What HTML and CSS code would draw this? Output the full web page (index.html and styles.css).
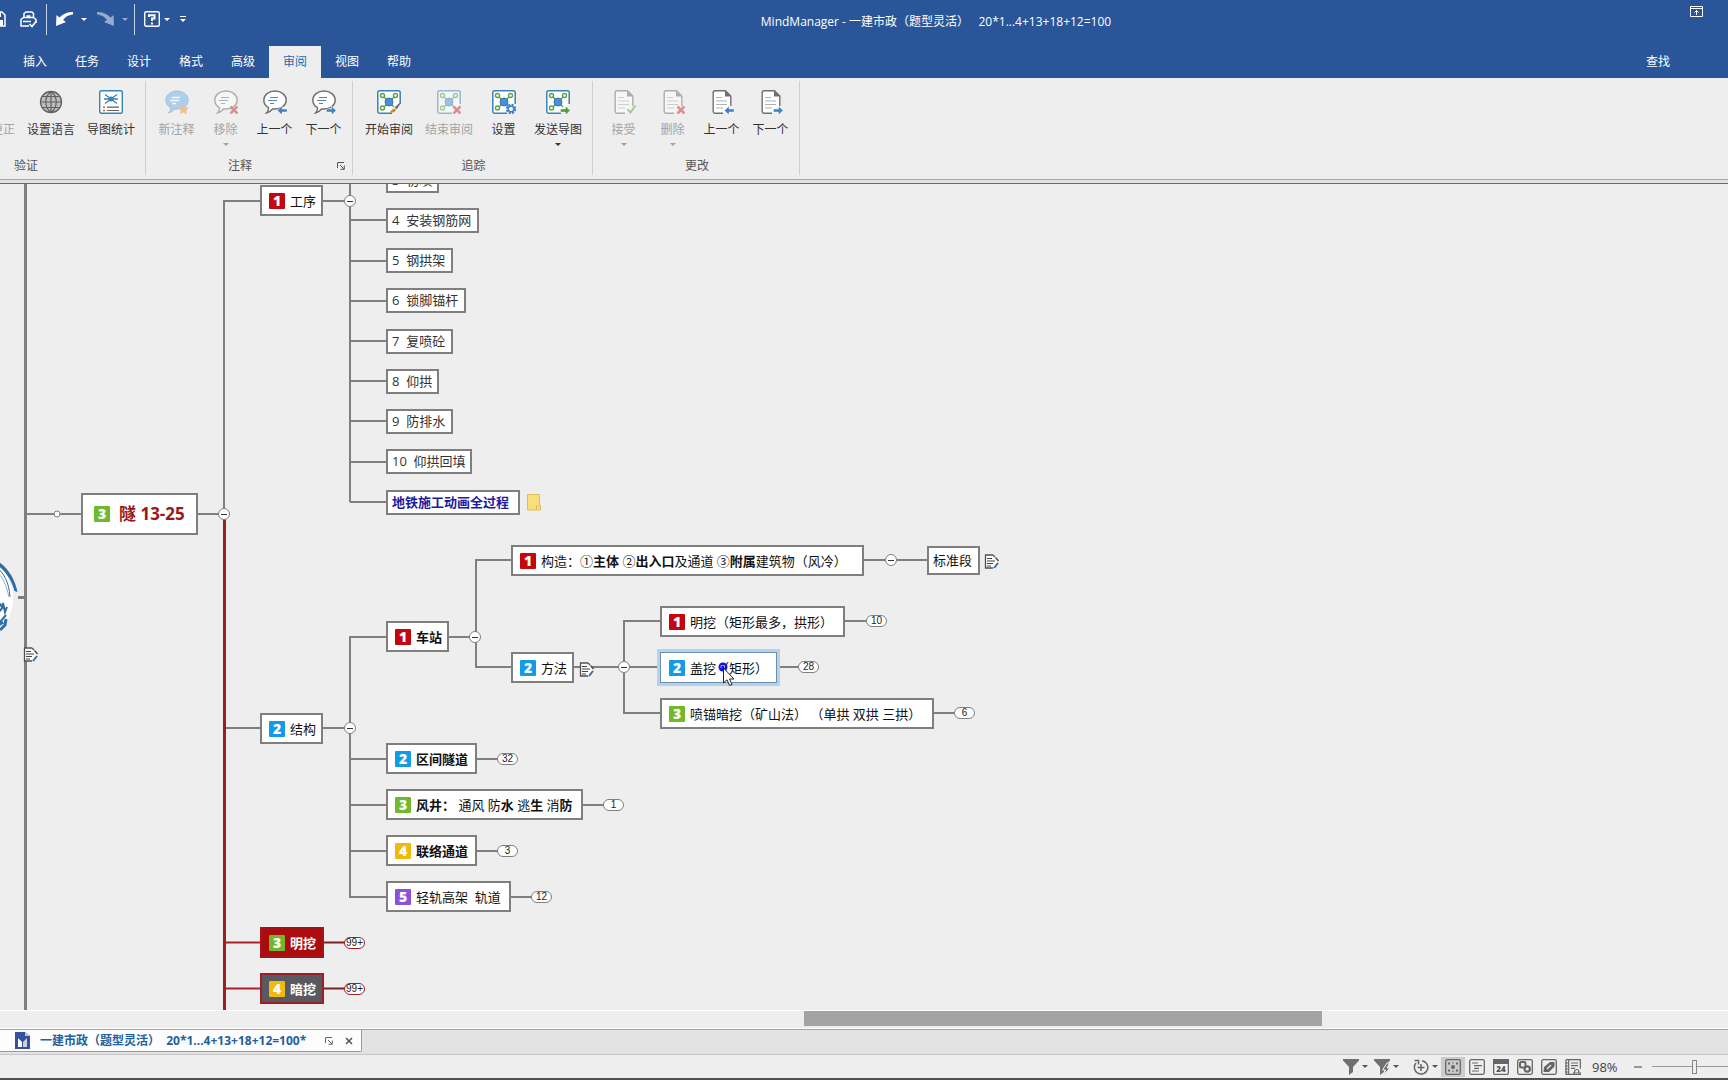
FILE: index.html
```html
<!DOCTYPE html>
<html lang="zh-CN">
<head>
<meta charset="utf-8">
<title>MindManager - 一建市政（题型灵活） 20*1...4+13+18+12=100</title>
<link rel="stylesheet" href="styles.css">
</head>
<body>
<svg class="sprite" aria-hidden="true">
  <defs>
    <symbol id="bubble" viewBox="0 0 24 24">
      <path d="M5.500 17.600C2.400 15.800.8 13.200.8 10.200.8 5 5.800 1 12 1s11.200 4 11.200 9.200S18.400 19 12 19H9.500C8 21 6 22.500 3.500 23c1.500-1.500 2.200-3.300 2-5.400z" fill="#fff" stroke="#707070" stroke-width="1.400"/>
      <path d="M7 7.500h8M5 10.500h9M7 13.500h4" stroke="#4a86c0" stroke-width="1.200"/>
    </symbol>
    <symbol id="frame" viewBox="0 0 24 24">
      <path d="M23.200 14V2.500Q23.200.8 21.500.8h-19Q.8.8.8 2.500v19Q.8 23.200 2.500 23.200H15" fill="#fff" stroke="#3b83b5" stroke-width="1.500"/>
      <path d="M7 7l10 10M17 7L7 17" stroke="#5aa23c" stroke-width="1.400"/>
      <g fill="#fff" stroke="#5aa23c" stroke-width="1.400"><circle cx="5.500" cy="5.500" r="2"/><circle cx="18.500" cy="5.500" r="2"/><circle cx="5.500" cy="18" r="2"/></g>
      <circle cx="12" cy="12" r="4" fill="#4a90d9" stroke="#2f78b8"/>
    </symbol>
    <symbol id="page" viewBox="0 0 24 24">
      <path d="M13 23.200H5Q3.200 23.200 3.200 21.500v-19Q3.200.8 5 .8h10.500L20.800 6v10" fill="#fff" stroke="#707070" stroke-width="1.400"/>
      <path d="M15 0l6.500 6.500H15z" fill="#707070"/>
      <path d="M6 7.500h6M6 11h11M6 14.500h11M6 18h7" stroke="#a8b4b8" stroke-width="1.200"/>
    </symbol>
    <symbol id="go-left" viewBox="0 0 24 24"><path d="M14.500 20.500l4.500-4.500v3h5v3h-5v3z" fill="#3f83c6" stroke="#fff" stroke-width=".4"/></symbol>
    <symbol id="go-right" viewBox="0 0 24 24"><path d="M24 20.500l-4.500-4.500v3h-5v3h5v3z" fill="currentColor" stroke="#fff" stroke-width=".4"/></symbol>
    <symbol id="cross" viewBox="0 0 24 24"><path d="M16.500 16.500l7 7M23.500 16.500l-7 7" stroke="#cc3333" stroke-width="2.600"/></symbol>
    <symbol id="launch" viewBox="0 0 8 8"><path d="M.5 6V.5H7M3 3l4 4M7.300 3.500v3.800H3.500" fill="none" stroke="currentColor"/></symbol>
    <symbol id="note" viewBox="0 0 16 16">
      <path d="M1 1h8l5 5.500-5 7.500H1z" fill="#fff"/>
      <path d="M9 1H1.500v13H9M9 1l2 2" fill="none" stroke="#505050" stroke-width="1.300"/>
      <path d="M3 4.500h5M3 7h8M3 9.500h6M3 12h4" stroke="#404040" stroke-width="1.200"/>
      <path d="M11.500 3.500l3 3.500" stroke="#505050" stroke-width="1.500"/>
      <path d="M14 9l-4 5" stroke="#3a6ea5" stroke-width="2"/>
    </symbol>
    <symbol id="funnel" viewBox="0 0 16 16"><path d="M0 0h16v1.500L10 8v5l-4 3V8L0 1.500z" fill="#707070"/></symbol>
  </defs>
</svg>

<header class="top">
  <div class="titlebar">
    <div class="quick">
      <button class="qbtn" aria-label="保存"><svg width="16" height="16" viewBox="0 0 16 16"><path d="M1 1h11l3 3v11H1z" fill="none" stroke="#fff" stroke-width="1.500"/><path d="M4 1h7v5H4zM3 15V9h10v6" fill="#fff"/></svg></button>
      <button class="qbtn print" aria-label="打印"><svg width="17" height="17" viewBox="0 0 17 17"><path d="M4 7V2.500L6 1h6l1.500 1.500V7M6.500 5h4M1 12V8.500L3.500 6.500h10l2.500 2v3.500M1 12v3h8" fill="none" stroke="#fff" stroke-width="1.500"/><path d="M3 10.500h8M9.500 13l2.500 2.500 4-5" fill="none" stroke="#fff" stroke-width="1.700"/></svg></button>
      <span class="qsep"></span>
      <button class="qbtn undo" aria-label="撤消"><svg width="17" height="16" viewBox="0 0 17 16"><path d="M0 15L.5 4l3 2.500C6.500 3 11 1 17 1v2.500C12 4 9.500 6 7 9l3 2z" fill="#fff"/></svg><i class="caret"></i></button>
      <button class="qbtn undo faded" aria-label="重做"><svg width="17" height="16" viewBox="0 0 17 16"><path d="M17 15L16.500 4l-3 2.500C10.500 3 6 1 0 1v2.500C5 4 7.500 6 10 9l-3 2z" fill="#fff"/></svg><i class="caret"></i></button>
      <span class="qsep"></span>
      <button class="qbtn help" aria-label="帮助"><svg width="16" height="16" viewBox="0 0 16 16"><rect x=".7" y=".7" width="14.600" height="14.600" rx="1.500" fill="none" stroke="#fff" stroke-width="1.400"/><path d="M5 6V4.200h5.500V7.500H8V10" fill="none" stroke="#fff" stroke-width="2"/><path d="M7 11.500h2v2H7z" fill="#fff"/></svg><i class="caret"></i></button>
      <button class="qbtn more" aria-label="自定义"><i class="caret"></i></button>
    </div>
    <div class="apptitle">MindManager - 一建市政（题型灵活）&nbsp;&nbsp; 20*1...4+13+18+12=100</div>
    <button class="ribbon-toggle" aria-label="功能区显示选项"><svg width="13" height="11" viewBox="0 0 13 11"><path d="M.5.500h12v10H.5zM.5 2.500h12M6.500 9V4.500M4.500 6.500l2-2 2 2" fill="none" stroke="#fff"/></svg></button>
  </div>
  <nav class="tabs">
    <button class="tab">插入</button><button class="tab">任务</button><button class="tab">设计</button><button class="tab">格式</button><button class="tab">高级</button><button class="tab active">审阅</button><button class="tab">视图</button><button class="tab">帮助</button>
    <button class="tab find">查找</button>
  </nav>
</header>

<section class="ribbon">
  <div class="group first">
    <div class="tools">
      <button class="tool wide off" disabled><svg class="ic"></svg>自动更正</button>
      <button class="tool wide"><svg class="ic" viewBox="0 0 24 24"><circle cx="12" cy="12" r="10.500" fill="#bdbdbd" stroke="#606060" stroke-width="1.300"/><path d="M12 1.500v21M1.500 12h21M3.500 6.500h17M3.500 17.500h17M12 1.500c-7 5-7 16 0 21M12 1.500c7 5 7 16 0 21" fill="none" stroke="#606060" stroke-width="1.200"/></svg>设置语言</button>
      <button class="tool wide"><svg class="ic" viewBox="0 0 24 24"><rect x=".7" y=".7" width="22.600" height="22.600" rx="1.500" fill="#fff" stroke="#3b83b5" stroke-width="1.400"/><path d="M6 4.500l12 9M18 4.500l-12 9M5 9h14" stroke="#3b83b5" stroke-width="1.300"/><circle cx="12" cy="9" r="2.500" fill="#3b83b5"/><path d="M4 17.200h2M4 20.500h2" stroke="#c06030" stroke-width="1.500"/><path d="M8 17.200h12M8 20.500h12" stroke="#606060" stroke-width="1.200"/></svg>导图统计</button>
    </div>
    <div class="caption">验证</div>
  </div>
  <div class="group">
    <div class="tools">
      <button class="tool off" disabled><svg class="ic" viewBox="0 0 24 24"><path d="M5.500 17.600C2.400 15.800.8 13.200.8 10.200.8 5 5.800 1 12 1s11.200 4 11.200 9.200S18.400 19 12 19H9.500C8 21 6 22.500 3.500 23c1.500-1.500 2.200-3.300 2-5.400z" fill="#6fb2ec" stroke="#4a94d8"/><path d="M7 7.500h8M5 10.500h9M7 13.500h4" stroke="#fff" stroke-width="1.300"/><path d="M18.500 13.500l1.700 3.600 3.800.5-2.800 2.700.7 3.900-3.400-1.900-3.400 1.900.7-3.900-2.800-2.700 3.800-.5z" fill="#e8952a"/></svg>新注释</button>
      <button class="tool off" disabled><svg class="ic" viewBox="0 0 24 24"><use href="#bubble"/><use href="#cross"/></svg>移除<i class="caret"></i></button>
      <button class="tool"><svg class="ic" viewBox="0 0 24 24"><use href="#bubble"/><use href="#go-left"/></svg>上一个</button>
      <button class="tool"><svg class="ic blue" viewBox="0 0 24 24"><use href="#bubble"/><use href="#go-right"/></svg>下一个</button>
    </div>
    <div class="caption dialog">注释<svg class="launcher" width="8" height="8"><use href="#launch"/></svg></div>
  </div>
  <div class="group">
    <div class="tools">
      <button class="tool wide"><svg class="ic" viewBox="0 0 24 24"><use href="#frame"/><path d="M24 12l-6 5.500 1.500 1.500z" fill="#707070" stroke="#707070"/><path d="M17.500 18.500c-2 0-3 2-5 4 3 .5 6-.5 6.500-2.500z" fill="#d08a2a"/></svg>开始审阅</button>
      <button class="tool wide off" disabled><svg class="ic" viewBox="0 0 24 24"><use href="#frame"/><use href="#cross"/></svg>结束审阅</button>
      <button class="tool"><svg class="ic" viewBox="0 0 24 24"><use href="#frame"/><circle cx="19" cy="19" r="4" fill="none" stroke="#3f83c6" stroke-width="2.500" stroke-dasharray="2 1.140"/><circle cx="19" cy="19" r="2.800" fill="#fff" stroke="#3f83c6" stroke-width="1.600"/></svg>设置</button>
      <button class="tool wide"><svg class="ic green" viewBox="0 0 24 24"><use href="#frame"/><use href="#go-right"/></svg>发送导图<i class="caret"></i></button>
    </div>
    <div class="caption">追踪</div>
  </div>
  <div class="group">
    <div class="tools">
      <button class="tool off" disabled><svg class="ic" viewBox="0 0 24 24"><use href="#page"/><path d="M15.500 19l3 3.500 5-7" fill="none" stroke="#5aa23c" stroke-width="1.800"/></svg>接受<i class="caret"></i></button>
      <button class="tool off" disabled><svg class="ic" viewBox="0 0 24 24"><use href="#page"/><use href="#cross"/></svg>删除<i class="caret"></i></button>
      <button class="tool"><svg class="ic" viewBox="0 0 24 24"><use href="#page"/><use href="#go-left"/></svg>上一个</button>
      <button class="tool"><svg class="ic blue" viewBox="0 0 24 24"><use href="#page"/><use href="#go-right"/></svg>下一个</button>
    </div>
    <div class="caption">更改</div>
  </div>
</section>

<main class="canvas">
  <div class="board">
    <svg class="wires" width="1728" height="1080" viewBox="0 0 1728 1080" fill="none" stroke="#7f7f7f" stroke-width="2">
      <circle cx="-34" cy="598" r="47" fill="#fff" stroke="none"/>
      <path d="M-4 560C8 567 15 579 17.500 592l-3-1C12 581 6 571-4 564z" fill="#2f6da5" stroke="none"/>
      <g stroke="#2f6da5">
        <path d="M-4 567C4 573 9 582 10 597" stroke-width="1"/>
        <path d="M-4 571C2 576 6 584 9 597" stroke="#8fb0d0" stroke-width="1"/>
        <path d="M-3 600l5 7 1-4 2 9 2-5M-2 613l5-6M0 622l6-7" stroke-width="2"/>
        <path d="M0 630l5-5 1-6M-4 627l7-5" stroke-width="3"/>
      </g>
      <path d="M25.500 180v840M18 597.500h8" stroke-width="3"/>
      <path d="M26 514h56M197 514h28M224 514V201h36M322 201h28M350 180v322M350 502h36M350 220h36M350 261h36M350 301h36M350 341h36M350 381h36M350 421h36M350 462h36"/>
      <path d="M225 728h35M322 728h28M386 637h-36v260h36M350 759h36M350 805h36M350 851h36"/>
      <path d="M448 637h28M512 560h-36v107h36M863 560h64M573 667h52M660 621h-36v92h36M624 667h36"/>
      <path d="M844 621h24M780 667h20M933 713h22M476 759h22M581 805h24M476 851h22M510 897h22"/>
      <path d="M224.500 514v506" stroke="#9c1f24" stroke-width="3"/>
      <path d="M226 942.500h35M226 988.500h35" stroke="#a8242a"/>
      <path d="M323 942.500h22M323 988.500h22" stroke="#7a2226"/>
      <circle cx="57" cy="514" r="3" fill="#fff" stroke-width="1"/>
    </svg>

    <div class="topic step t-s3">3&nbsp; 初喷</div>
    <div class="topic t-gx"><b class="num n1">1</b>工序</div>
    <div class="topic step t-s4">4&nbsp; 安装钢筋网</div>
    <div class="topic step t-s5">5&nbsp; 钢拱架</div>
    <div class="topic step t-s6">6&nbsp; 锁脚锚杆</div>
    <div class="topic step t-s7">7&nbsp; 复喷砼</div>
    <div class="topic step t-s8">8&nbsp; 仰拱</div>
    <div class="topic step t-s9">9&nbsp; 防排水</div>
    <div class="topic step t-s10">10&nbsp; 仰拱回填</div>
    <div class="topic step t-link"><a href="#">地铁施工动画全过程</a></div>
    <svg class="sticky" width="14" height="17" viewBox="0 0 14 17"><path d="M.5.500h12v10.500h1v5H.5z" fill="#f8df7c" stroke="#dcbf58"/><path d="M9.500 15.500V12h3" fill="none" stroke="#dcbf58"/></svg>

    <div class="topic main t-sui"><b class="num n3">3</b>隧 13-25</div>

    <div class="topic t-gz"><b class="num n1">1</b><span>构造：①<b>主体</b> ②<b>出入口</b>及通道 ③<b>附属</b>建筑物（风冷）</span></div>
    <div class="topic plain t-bzd">标准段</div>
    <div class="topic t-cz"><b class="num n1">1</b><b>车站</b></div>
    <div class="topic t-ff"><b class="num n2">2</b>方法</div>
    <div class="topic t-mw"><b class="num n1">1</b>明挖（矩形最多，拱形）</div>
    <div class="topic selected t-gw"><b class="num n2">2</b>盖挖（矩形）</div>
    <div class="topic t-pm"><b class="num n3">3</b>喷锚暗挖（矿山法） （单拱 双拱 三拱）</div>
    <div class="topic t-jg"><b class="num n2">2</b>结构</div>
    <div class="topic t-qj"><b class="num n2">2</b><b>区间隧道</b></div>
    <div class="topic t-fj"><b class="num n3">3</b><span><b>风井：</b> 通风 防<b>水</b> 逃<b>生</b> 消<b>防</b></span></div>
    <div class="topic t-ll"><b class="num n4">4</b><b>联络通道</b></div>
    <div class="topic t-qg"><b class="num n5">5</b>轻轨高架&nbsp; 轨道</div>
    <div class="topic red t-rmw"><b class="num n3">3</b><b>明挖</b></div>
    <div class="topic dark t-raw"><b class="num n4">4</b><b>暗挖</b></div>

    <button class="fold f-gx" aria-label="折叠"></button>
    <button class="fold f-sui" aria-label="折叠"></button>
    <button class="fold f-jg" aria-label="折叠"></button>
    <button class="fold f-cz" aria-label="折叠"></button>
    <button class="fold f-gz" aria-label="折叠"></button>
    <button class="fold f-ff" aria-label="折叠"></button>

    <button class="count c-mw">10</button>
    <button class="count c-gw">28</button>
    <button class="count c-pm">6</button>
    <button class="count c-qj">32</button>
    <button class="count c-fj">1</button>
    <button class="count c-ll">3</button>
    <button class="count c-qg">12</button>
    <button class="count hot c-rmw">99+</button>
    <button class="count hot c-raw">99+</button>

    <svg class="note k-root" width="16" height="16"><use href="#note"/></svg>
    <svg class="note k-bzd" width="16" height="16"><use href="#note"/></svg>
    <svg class="note k-ff" width="16" height="16"><use href="#note"/></svg>
    <svg class="pointer" width="18" height="25" viewBox="0 0 18 25"><circle cx="5" cy="5" r="4.500" fill="#1414d8"/><path d="M3 6V3.500h3.500V6" fill="none" stroke="#9a9aff"/><path d="M5.500 6v15l3.500-3.200 2.600 5.700 2.400-1.200-2.500-5.300H16z" fill="#fff" stroke="#222"/></svg>
  </div>
</main>

<div class="hscroll"><div class="thumb"></div></div>

<div class="docbar">
  <div class="doctab">
    <svg width="15" height="17" viewBox="0 0 15 17"><path d="M0 0h10l5 4v13H0z" fill="#34539c"/><path d="M10 0v4h5z" fill="#b9c6e6"/><path d="M3 15V6l4 4v5z" fill="#fff"/><path d="M12 15V6L8 10v5z" fill="#c8cfdf"/></svg>
    <span class="docname">一建市政（题型灵活）&nbsp; 20*1...4+13+18+12=100*</span>
    <svg class="pin" width="8" height="8"><use href="#launch"/></svg>
    <button class="close" aria-label="关闭"><svg width="8" height="8" viewBox="0 0 8 8"><path d="M1 1l6 6M7 1L1 7" stroke="#555" stroke-width="1.500"/></svg></button>
  </div>
</div>

<footer class="status">
  <button class="sbtn drop" aria-label="筛选"><svg width="16" height="16"><use href="#funnel"/></svg><i class="caret"></i></button>
  <button class="sbtn drop" aria-label="快速筛选"><svg width="16" height="16"><use href="#funnel"/><path d="M13 4l-4.500 7h3l-2 5 6.500-7h-3l2.500-5z" fill="#707070" stroke="#eee"/></svg><i class="caret"></i></button>
  <button class="sbtn drop focus" aria-label="焦点"><svg width="16" height="16" viewBox="0 0 16 16"><path d="M9 1.700A6.700 6.700 0 1 1 3 4M8 5v7M4.500 8.500h7M1.500 1.500h4v4" fill="none" stroke="#666" stroke-width="1.500"/></svg><i class="caret"></i></button>
  <button class="sbtn on" aria-label="导图视图"><svg width="16" height="16" viewBox="0 0 16 16"><rect x=".7" y=".7" width="14.600" height="14.600" rx="1.500" fill="none" stroke="#666" stroke-width="1.300"/><circle cx="8" cy="8" r="2" fill="#666"/><path d="M3 3.500h2v2H3zM11 3.500h2v2h-2zM3 10.500h2v2H3zM11 10.500h2v2h-2zM7.500 3h1v1.500h-1zM7.500 11.500h1V13h-1z" fill="#666"/></svg></button>
  <button class="sbtn" aria-label="大纲视图"><svg width="16" height="16" viewBox="0 0 16 16"><rect x=".7" y=".7" width="14.600" height="14.600" rx="1.500" fill="none" stroke="#666" stroke-width="1.300"/><path d="M3 4h6M5 6.700h8M5 9.300h5M3 12h7" stroke="#666" stroke-width="1.200"/></svg></button>
  <button class="sbtn cal" aria-label="日程视图"><svg width="16" height="16" viewBox="0 0 16 16"><rect x=".7" y=".7" width="14.600" height="14.600" rx="1" fill="#f4f4f4" stroke="#666" stroke-width="1.300"/><path d="M0 0h16v5H0z" fill="#666"/></svg><span>24</span></button>
  <button class="sbtn" aria-label="链接视图"><svg width="16" height="16" viewBox="0 0 16 16"><rect x=".7" y=".7" width="14.600" height="14.600" rx="1.500" fill="none" stroke="#666" stroke-width="1.300"/><rect x="3" y="3" width="5.500" height="5.500" rx="1.500" fill="none" stroke="#666" stroke-width="2"/><circle cx="10.200" cy="10" r="2.700" fill="none" stroke="#666" stroke-width="2.200"/></svg></button>
  <button class="sbtn" aria-label="标记视图"><svg width="16" height="16" viewBox="0 0 16 16"><rect x=".7" y=".7" width="14.600" height="14.600" rx="1.500" fill="none" stroke="#666" stroke-width="1.300"/><path d="M2.500 13l.5-5 6-5h4.500v4.500L8 13z" fill="#666"/><path d="M6 10l4-4" stroke="#eee" stroke-width="1.300"/></svg></button>
  <button class="sbtn" aria-label="备注视图"><svg width="16" height="16" viewBox="0 0 16 16"><path d="M1 .700h14.300v9M1 .700v14.600h7M3.700 1v14M6 4h7M6 6.700h7M6 9.300h4M0 4h3M0 7h3M0 10h3M0 13h3" fill="none" stroke="#666" stroke-width="1.200"/><path d="M9.500 13.500c0-4 4.500-4 4.500 0M8.500 14h7v1.500h-7z" fill="none" stroke="#666" stroke-width="1.200"/></svg></button>
  <span class="zoom">98%</span>
  <button class="minus" aria-label="缩小"></button>
  <input class="slider" type="range" min="0" max="200" value="98" aria-label="缩放">
</footer>
</body>
</html>
```
FILE: styles.css
```css
* { box-sizing: border-box; }

body {
  margin: 0;
  min-height: 100vh;
  display: flex;
  flex-direction: column;
  overflow: hidden;
  background: #eee;
  font: 12px/16px "Open Sans", "Noto Sans CJK SC", sans-serif;
  color: #333;
}

button {
  margin: 0;
  padding: 0;
  border: 0;
  background: none;
  font: inherit;
  color: inherit;
}

svg { display: block; flex: none; }
.sprite { position: absolute; width: 0; height: 0; }

.caret {
  flex: none;
  width: 0;
  border: 3px solid transparent;
  border-top-color: currentColor;
  border-bottom: 0;
}

/* title bar */
.top { background: #2a5699; color: #fff; }
.titlebar { display: flex; height: 46px; align-items: flex-start; }
.quick {
  flex: none;
  display: flex;
  align-items: center;
  justify-content: flex-end;
  width: 190px;
  height: 38px;
  padding-right: 4px;
  overflow: hidden;
}
.qbtn { display: flex; align-items: center; flex: none; }
.print { margin: 0 9px 0 14px; }
.qsep { flex: none; width: 1px; height: 31px; background: #c5d3e8; }
.undo { width: 41px; gap: 8px; padding-left: 9px; }
.undo + .qsep { margin-left: 5px; }
.help { gap: 4px; margin-left: 9px; }
.faded { opacity: .5; }
.more { flex-direction: column; gap: 2px; margin-left: 10px; }
.more::before { content: ""; order: -1; width: 6px; height: 1px; background: #fff; }
.apptitle { flex: 1; padding-top: 14px; text-align: center; white-space: nowrap; }
.ribbon-toggle { width: 46px; padding: 6px 0 0 8px; }

.tabs { display: flex; height: 32px; padding: 0 44px 0 9px; }
.tab { width: 52px; height: 32px; color: #fff; }
.tab.active { background: #eee; color: #2a6cb0; }
.find { margin-left: auto; }

/* ribbon */
.ribbon {
  display: flex;
  height: 106px;
  flex: none;
  border-bottom: 1px solid #6a6a6a;
  box-shadow: inset 0 -3px #e2e2e2, inset 0 -4px #a8a8a8;
}
.group { position: relative; padding: 12px 5px 0 6px; }
.group::after {
  content: "";
  position: absolute;
  top: 3px;
  right: 0;
  width: 1px;
  height: 94px;
  background: #cfcfcf;
}
.group.first { width: 146px; overflow: hidden; }
.first .tools { justify-content: flex-end; }
.first .caption { width: 52px; margin-left: -6px; }
.tools { display: flex; height: 68px; }
.tool {
  display: flex;
  flex-direction: column;
  align-items: center;
  flex: none;
  width: 49px;
  height: 60px;
  white-space: nowrap;
}
.tool.wide { width: 60px; }
.tool.off { color: #a3a3a3; }
.tool.off .ic { opacity: .5; }
.tool .caret { margin-top: 5px; }
.ic { width: 24px; height: 24px; margin-bottom: 8px; }
.ic.blue { color: #3f83c6; }
.ic.green { color: #4f9a3c; }
.caption { position: relative; text-align: center; color: #555; }
.dialog { padding-right: 20px; }
.launcher { position: absolute; right: 3px; top: 4px; }

/* mind map */
.canvas { position: relative; flex: 1; overflow: hidden; background: #eee; }
.board { position: absolute; left: 0; top: -184px; }
.topic {
  position: absolute;
  display: flex;
  align-items: center;
  gap: 5px;
  height: 31px;
  padding-left: 7px;
  border: 2px solid #7f7f7f;
  background: #fff;
  color: #111;
  font-size: 13px;
  white-space: nowrap;
}
.num {
  display: flex;
  align-items: center;
  justify-content: center;
  width: 16px;
  height: 16px;
  border-radius: 1px;
  color: #fff;
  font-size: 14px;
  font-weight: 800;
}
.n1 { background: #c4070d; }
.n2 { background: #149be8; }
.n3 { background: #70b82c; }
.n4 { background: #f2b80c; }
.n5 { background: #8e50dc; }
.step { left: 386px; height: 25px; padding: 0 0 2px 4px; color: #333; }
.step a { color: #1c1ca0; font-weight: 700; text-decoration: none; }
.plain { padding: 0 0 2px 4px; }
.main { height: 42px; padding-left: 11px; gap: 9px; color: #9c1717; font-size: 17px; font-weight: 700; }
.selected { border: 1px solid #6f8fae; padding-left: 8px; box-shadow: 0 0 0 3px #b4d2ea; }
.red { background: #ad0c0f; border-color: #a01518; color: #fff; }
.dark { background: #595a60; border-color: #9c1f24; color: #fff; }

.t-gx { left: 260px; top: 185px; width: 63px; }
.t-s3 { top: 168px; width: 53px; }
.t-s4 { top: 208px; width: 93px; }
.t-s5 { top: 248px; width: 67px; }
.t-s6 { top: 288px; width: 80px; }
.t-s7 { top: 329px; width: 67px; }
.t-s8 { top: 369px; width: 53px; }
.t-s9 { top: 409px; width: 67px; }
.t-s10 { top: 449px; width: 86px; }
.t-link { top: 490px; width: 134px; }
.t-sui { left: 81px; top: 493px; width: 117px; }
.t-gz { left: 511px; top: 545px; width: 353px; }
.t-bzd { left: 927px; top: 546px; width: 53px; height: 29px; }
.t-cz { left: 386px; top: 621px; width: 63px; }
.t-ff { left: 511px; top: 652px; width: 63px; }
.t-mw { left: 660px; top: 606px; width: 185px; }
.t-gw { left: 660px; top: 652px; width: 117px; }
.t-pm { left: 660px; top: 698px; width: 274px; }
.t-jg { left: 260px; top: 713px; width: 63px; }
.t-qj { left: 386px; top: 743px; width: 91px; }
.t-fj { left: 386px; top: 789px; width: 197px; }
.t-ll { left: 386px; top: 835px; width: 91px; }
.t-qg { left: 386px; top: 881px; width: 125px; }
.t-rmw { left: 260px; top: 927px; width: 64px; }
.t-raw { left: 260px; top: 973px; width: 64px; }

.fold {
  position: absolute;
  width: 12px;
  height: 12px;
  border: 1px solid #7f7f7f;
  border-radius: 50%;
  background: linear-gradient(#333, #333) center / 6px 1px no-repeat #fff;
}
.f-gx { left: 344px; top: 195px; }
.f-sui { left: 218px; top: 508px; }
.f-jg { left: 344px; top: 722px; }
.f-cz { left: 469px; top: 631px; }
.f-gz { left: 885px; top: 554px; }
.f-ff { left: 618px; top: 661px; }

.count {
  position: absolute;
  width: 21px;
  height: 12px;
  border: 1px solid #7f7f7f;
  border-radius: 6px;
  background: #fff;
  color: #222;
  font: 10px/10px "Liberation Sans", sans-serif;
  text-align: center;
}
.hot { border-color: #9c1f24; }
.c-mw { left: 866px; top: 615px; }
.c-gw { left: 798px; top: 661px; }
.c-pm { left: 954px; top: 707px; }
.c-qj { left: 497px; top: 753px; }
.c-fj { left: 603px; top: 799px; }
.c-ll { left: 497px; top: 845px; }
.c-qg { left: 531px; top: 891px; }
.c-rmw { left: 344px; top: 937px; }
.c-raw { left: 344px; top: 983px; }

.note { position: absolute; }
.k-root { left: 23px; top: 647px; }
.k-bzd { left: 984px; top: 554px; }
.k-ff { left: 579px; top: 662px; }
.sticky { position: absolute; left: 527px; top: 494px; }
.pointer { position: absolute; left: 718px; top: 662px; }

/* horizontal scroll bar */
.hscroll { flex: none; height: 19px; border-top: 1px solid #fff; border-bottom: 1px solid #fff; }
.thumb { width: 30%; height: 15px; margin-left: 46.5%; background: #a3a3a3; }

/* document tabs */
.docbar {
  flex: none;
  height: 26px;
  border-top: 1px solid #a3a3a3;
  border-bottom: 1px solid #c6c6c6;
  background: #e3e3e3;
}
.doctab {
  display: flex;
  align-items: center;
  width: 362px;
  height: 22px;
  padding: 0 8px 0 15px;
  border-right: 1px solid #9a9a9a;
  border-bottom: 1px solid #9a9a9a;
  border-bottom-right-radius: 2px;
  background: #fdfdfd;
}
.docname { margin-left: 10px; color: #22609f; font-weight: 700; white-space: nowrap; }
.pin { margin-left: auto; color: #666; }
.close { margin-left: 12px; }

/* status bar */
.status {
  flex: none;
  display: flex;
  align-items: center;
  justify-content: flex-end;
  height: 25px;
  border-bottom: 2px solid #505050;
  overflow: hidden;
}
.sbtn { display: flex; align-items: center; justify-content: center; flex: none; width: 24px; height: 20px; }
.sbtn.drop { width: 31px; gap: 3px; color: #555; justify-content: flex-start; }
.sbtn.drop.focus { margin: 0 -3px 0 8px; }
.sbtn.on { background: #cbcbcb; }
.cal { position: relative; }
.cal span { position: absolute; left: 0; top: 7px; width: 24px; font-size: 8px; font-weight: 800; line-height: 10px; color: #555; text-align: center; }
.zoom { width: 42px; margin-left: 7px; font-size: 13px; color: #444; }
.minus { width: 8px; height: 2px; margin-right: 10px; background: #999; }
.slider { -webkit-appearance: none; appearance: none; flex: none; width: 86px; height: 16px; margin: 0 -10px 0 0; background: linear-gradient(#999, #999) center / 100% 1px no-repeat; }
.slider::-webkit-slider-thumb { -webkit-appearance: none; width: 5px; height: 14px; border: 1px solid #888; background: #eee; }
```
